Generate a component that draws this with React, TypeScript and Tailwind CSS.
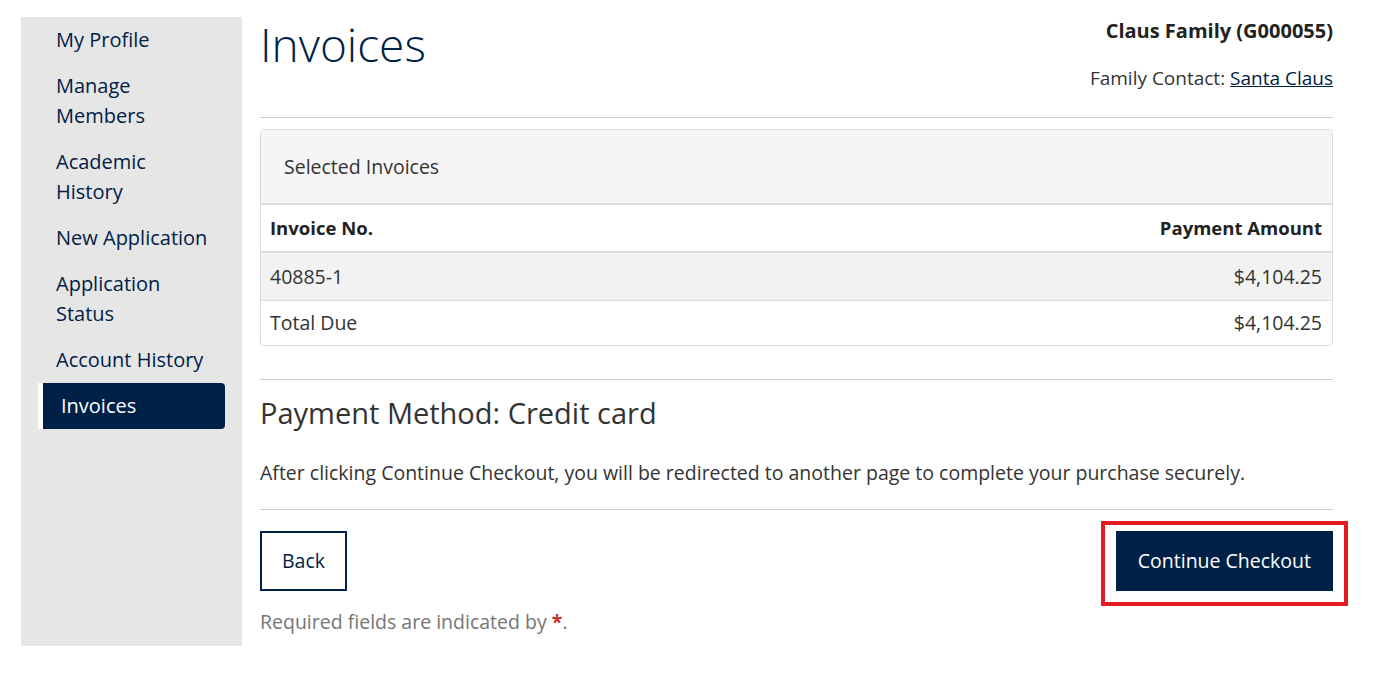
import React from 'react';

const NAVY = 'text-[#002147]';

const navItems = [
  'My Profile',
  'Manage Members',
  'Academic History',
  'New Application',
  'Application Status',
  'Account History',
  'Invoices',
];

const Sidebar: React.FC = () => {
  return (
    <nav className="w-[221px] shrink-0 bg-[#e6e6e6]">
      <ul>
        {navItems.map((item) => {
          const active = item === 'Invoices';
          return (
            <li key={item} className="mx-[17px]">
              {active ? (
                <a className="block rounded-r-[4px] border-l-[5px] border-white bg-[#002147] py-2 pl-[18px] pr-4 text-[20px] leading-[30px] text-white">
                  {item}
                </a>
              ) : (
                <a className={`block py-2 pl-[18px] pr-[17px] text-[20px] leading-[30px] ${NAVY}`}>{item}</a>
              )}
            </li>
          );
        })}
      </ul>
    </nav>
  );
};

const App: React.FC = () => {
  return (
    <div
      className="min-h-screen bg-white pl-[21px] pt-[17px] text-[#333]"
      style={{ fontFamily: '"Open Sans", "Noto Sans", sans-serif' }}
    >
      <div className="flex">
        <Sidebar />
        <main className="ml-[18px] w-[1073px] pb-[10px]">
          <div className="flex items-start justify-between border-b border-[#cccccc] pb-[25px]">
            <h1 className={`text-[46px] font-light leading-[54px] ${NAVY}`}>Invoices</h1>
            <div className="text-right leading-[28px]">
              <p className="text-[20px] font-bold text-[#222]">Claus Family (G000055)</p>
              <p className="mt-[19px] text-[19px] text-[#333]">
                Family Contact: <a className={`underline ${NAVY}`}>Santa Claus</a>
              </p>
            </div>
          </div>

          <div className="mt-[11px] overflow-hidden rounded-[4px] border border-[#dddddd] text-[19.5px]">
            <div className="flex h-[75px] items-center border-b-2 border-[#dddddd] bg-[#f5f5f5] px-[23px]">
              Selected Invoices
            </div>
            <table className="w-full">
              <thead>
                <tr className="h-[47px] border-b-2 border-[#dddddd]">
                  <th className="px-[9px] text-left text-[18.5px] font-bold text-[#222]">Invoice No.</th>
                  <th className="px-[10px] text-right text-[18.5px] font-bold text-[#222]">Payment Amount</th>
                </tr>
              </thead>
              <tbody>
                <tr className="h-[48px] border-b border-[#dddddd] bg-[#f2f2f2]">
                  <td className="px-[9px]">40885-1</td>
                  <td className="px-[10px] text-right">$4,104.25</td>
                </tr>
                <tr className="h-[45px]">
                  <td className="px-[9px]">Total Due</td>
                  <td className="px-[10px] text-right">$4,104.25</td>
                </tr>
              </tbody>
            </table>
          </div>

          <div className="mt-[33px] border-t border-[#cccccc] pt-[13px]">
            <h2 className="text-[29px] leading-[40px] text-[#333]">Payment Method: Credit card</h2>
            <p className="mt-[26px] pb-[22px] text-[19.5px] leading-[28px]">
              After clicking Continue Checkout, you will be redirected to another page to complete your purchase securely.
            </p>
          </div>

          <div className="flex items-center justify-between border-t border-[#cccccc] pt-[21px]">
            <button className={`h-[60px] border-2 border-[#002147] bg-white px-[20px] text-[19.5px] ${NAVY}`}>
              Back
            </button>
            <div className="relative">
              <div className="pointer-events-none absolute -bottom-[15px] -left-[15px] -right-[15px] -top-[10px] border-4 border-[#e31b23]" />
              <button className="h-[60px] bg-[#002147] px-[22px] text-[19.5px] text-white">Continue Checkout</button>
            </div>
          </div>

          <p className="mt-[17px] text-[19.5px] leading-[28px] text-[#767676]">
            Required fields are indicated by <span className="font-bold text-[#c9302c]">*</span>.
          </p>
        </main>
      </div>
    </div>
  );
};

export default App;
